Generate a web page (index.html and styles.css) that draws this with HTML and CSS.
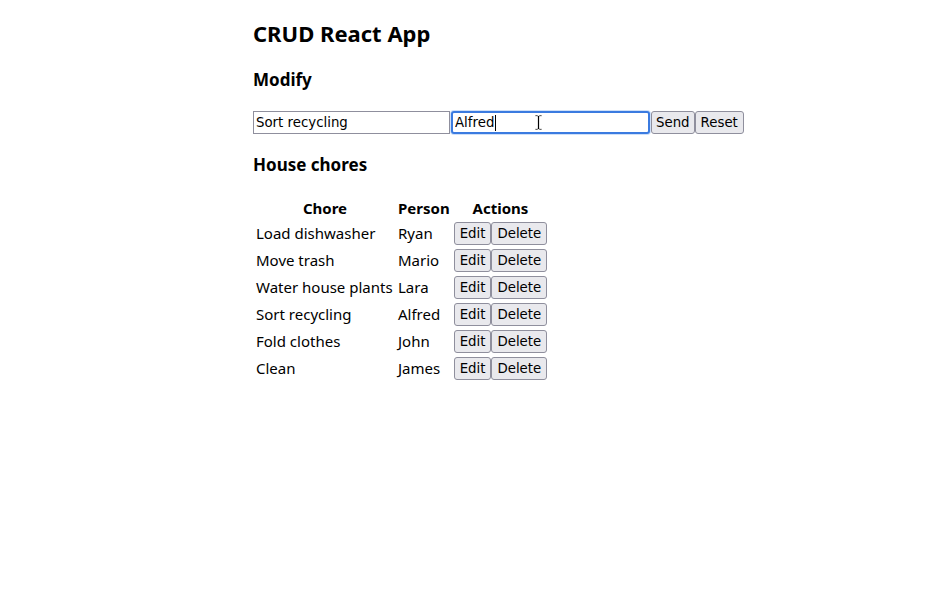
FILE: index.html
```html
<!DOCTYPE html>
<html>
<head>
<meta charset="utf-8">
<link rel="stylesheet" href="styles.css">
</head>
<body>
<div class="app">
  <h1 class="title">CRUD React App</h1>
  <h2 class="section section-modify">Modify</h2>
  <form class="form">
    <input class="field" type="text" value="Sort recycling">
    <div class="focus-wrap">
      <input class="field field-focus" type="text" value="Alfred">
      <span class="caret"></span>
      <svg class="ibeam" width="9" height="17" viewBox="0 0 9 17" aria-hidden="true">
        <path d="M1 1h2.5l1 1 1-1H8v1.5H5.5v12H8V16H5.5l-1-1-1 1H1v-1.5h2.5v-12H1z" fill="#000" stroke="#fff" stroke-width="0.8"/>
      </svg>
    </div>
    <button class="btn btn-send" type="button">Send</button>
    <button class="btn btn-reset" type="button">Reset</button>
  </form>
  <h2 class="section section-list">House chores</h2>
  <table class="chores">
    <thead>
      <tr><th class="col-chore">Chore</th><th>Person</th><th>Actions</th></tr>
    </thead>
    <tbody>
      <tr><td>Load dishwasher</td><td>Ryan</td><td class="actions"><button class="btn" type="button">Edit</button><button class="btn" type="button">Delete</button></td></tr>
      <tr><td>Move trash</td><td>Mario</td><td class="actions"><button class="btn" type="button">Edit</button><button class="btn" type="button">Delete</button></td></tr>
      <tr><td>Water house plants</td><td>Lara</td><td class="actions"><button class="btn" type="button">Edit</button><button class="btn" type="button">Delete</button></td></tr>
      <tr><td>Sort recycling</td><td>Alfred</td><td class="actions"><button class="btn" type="button">Edit</button><button class="btn" type="button">Delete</button></td></tr>
      <tr><td>Fold clothes</td><td>John</td><td class="actions"><button class="btn" type="button">Edit</button><button class="btn" type="button">Delete</button></td></tr>
      <tr><td>Clean</td><td>James</td><td class="actions"><button class="btn" type="button">Edit</button><button class="btn" type="button">Delete</button></td></tr>
    </tbody>
  </table>
</div>
</body>
</html>
```
FILE: styles.css
```css
html, body {
  margin: 0;
  background: #fff;
}
body {
  font-family: "Noto Sans", sans-serif;
  font-size: 15px;
  color: #000;
}
.app {
  width: 444px;
  margin: 0 auto;
  padding-top: 18px;
}
.title {
  font-size: 22px;
  font-weight: 700;
  line-height: 30px;
  margin: 0 0 20px;
}
.section {
  font-size: 17px;
  font-weight: 700;
  line-height: 23px;
  margin: 20px 0 19px;
}
.section-modify {
  margin-bottom: 20px;
}
.section-list {
  margin-top: 19px;
}
.form {
  display: flex;
  align-items: stretch;
  white-space: nowrap;
  margin: 0;
}
.form > * {
  flex: none;
}
.field {
  font-family: "DejaVu Sans", sans-serif;
  font-size: 13.33px;
  width: 197px;
  height: 23px;
  box-sizing: border-box;
  padding: 1px 2px;
  border: 1px solid #8f8f9d;
  border-radius: 0;
  margin: 0;
  color: #000;
  background: #fff;
  outline: none;
}
.focus-wrap {
  position: relative;
  margin-left: 1px;
}
.field-focus {
  width: 199px;
  border: 2px solid #3b7be0;
  border-radius: 3px;
  padding: 0 2px;
  box-shadow: 0 0 0 1px #cfe0f8;
}
.caret {
  position: absolute;
  left: 44px;
  top: 4px;
  width: 1px;
  height: 16px;
  background: #000;
}
.ibeam {
  position: absolute;
  left: 83px;
  top: 3px;
}
.btn {
  font-family: "DejaVu Sans", sans-serif;
  font-size: 13.33px;
  height: 23px;
  box-sizing: border-box;
  padding: 1px 5px;
  border: 1px solid #8f8f9d;
  border-radius: 3px;
  background: #e9e9ed;
  color: #000;
  margin: 0;
}
.btn-send {
  margin-left: 1px;
  padding: 1px 4px;
}
.btn-reset {
  padding: 1px 5px;
}
.chores {
  border-spacing: 2px;
}
.chores th,
.chores td {
  padding: 1px;
}
.chores th {
  line-height: 20px;
}
.col-chore {
  width: 138px;
}
.chores td {
  line-height: 23px;
  height: 23px;
}
.actions {
  white-space: nowrap;
  font-size: 0;
  line-height: 0;
}
.actions .btn {
  vertical-align: top;
}
```
